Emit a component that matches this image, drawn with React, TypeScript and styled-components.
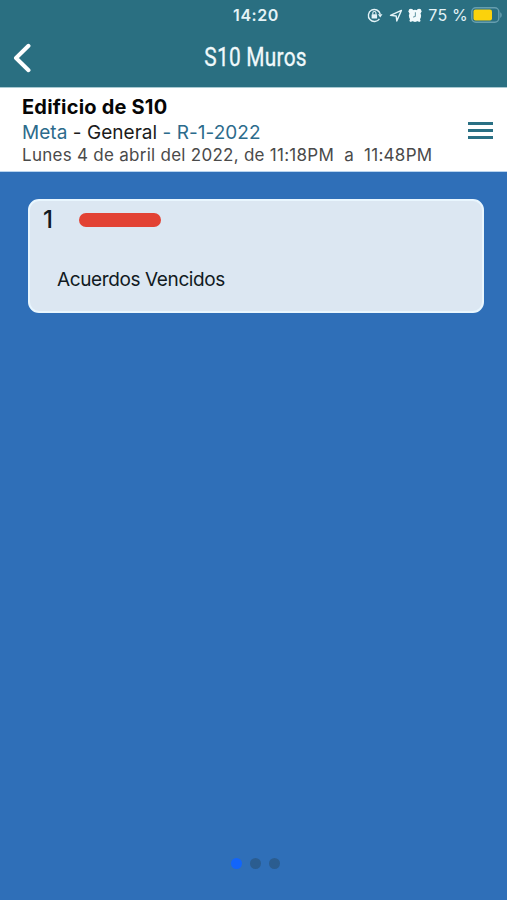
import React from "react";
import styled, { createGlobalStyle } from "styled-components";

const GlobalStyle = createGlobalStyle`
  * { box-sizing: border-box; }
  body { margin: 0; font-family: Inter, "Liberation Sans", sans-serif; }
`;

const Screen = styled.div`
  display: flex;
  flex-direction: column;
  width: 507px;
  height: 900px;
  overflow: hidden;
  background: #2f6fb8;
`;

const Header = styled.header`
  height: 88px;
  background: #2a6f81;
  border-bottom: 1px solid #a9cad2;
`;

const StatusBar = styled.div`
  display: grid;
  grid-template-columns: 1fr auto 1fr;
  align-items: center;
  height: 30px;
  padding: 0 5px 0 0;
  color: #e4f3f7;
`;

const Clock = styled.time`
  grid-column: 2;
  padding-left: 10px;
  font-size: 16px;
  font-weight: 600;
  letter-spacing: 0.55px;
`;

const StatusIcons = styled.div`
  display: flex;
  align-items: center;
  justify-content: flex-end;
  height: 30px;
`;

const ArrowIcon = styled.svg`
  margin-left: 6px;
`;

const AlarmIcon = styled.svg`
  margin-left: 5px;
`;

const Percent = styled.span`
  margin: 0 3px 0 6px;
  font-size: 16px;
  letter-spacing: 0.2px;
  white-space: nowrap;
`;

const NavBar = styled.div`
  display: grid;
  grid-template-columns: 60px 1fr 60px;
  align-items: center;
  height: 56px;
`;

const BackButton = styled.button`
  display: flex;
  padding: 0 0 0 12px;
  border: 0;
  background: none;
`;

const Title = styled.h1`
  margin: 0;
  padding-left: 5px;
  color: #f0f9fb;
  font: 400 25px/32px Roboto, sans-serif;
  letter-spacing: 0.3px;
  text-align: center;
  transform: scaleX(0.835);
  -webkit-text-stroke: 0.3px #f0f9fb;
`;

const Meeting = styled.section`
  display: flex;
  justify-content: space-between;
  height: 84px;
  padding: 7px 14px 0 22px;
  background: #fff;
  border-bottom: 1px solid #b9d4ef;
`;

const Details = styled.div`
  white-space: pre;
`;

const Name = styled.h2`
  margin: 0;
  color: #060606;
  font-size: 20px;
  font-weight: 700;
  line-height: 25px;
  letter-spacing: 0.2px;
`;

const Reference = styled.div`
  color: #2c6b8c;
  font-size: 19px;
  line-height: 25px;
  letter-spacing: 0.04px;
`;

const Group = styled.span`
  color: #1b1b1b;
`;

const Schedule = styled.div`
  color: #4a4a4a;
  font-size: 17px;
  line-height: 21px;
  letter-spacing: 0.27px;
`;

const MenuButton = styled.button`
  display: flex;
  flex-direction: column;
  gap: 4px;
  align-self: flex-start;
  margin: 27px 0 0;
  padding: 0;
  border: 0;
  background: none;
`;

const MenuLine = styled.span`
  width: 25px;
  height: 3px;
  background: #2a7084;
`;

const Content = styled.main`
  flex: 1;
  padding: 27px 23px 0 28px;
`;

const Card = styled.article`
  height: 114px;
  padding: 7px 13px;
  border: 2px solid #e9f6fe;
  border-radius: 11px;
  background: #dce7f2;
  color: #111a22;
`;

const CardTop = styled.div`
  display: flex;
  align-items: center;
  height: 24px;
`;

const Count = styled.span`
  width: 36px;
  font-size: 24px;
  font-weight: 500;
  line-height: 24px;
`;

const Bar = styled.span`
  width: 82px;
  height: 14px;
  border-radius: 7px;
  background: #e24234;
`;

const CardLabel = styled.div`
  margin: 36px 0 0 14px;
  font-size: 19px;
  line-height: 24px;
  letter-spacing: -0.38px;
  white-space: nowrap;
`;

const Pager = styled.nav`
  display: flex;
  justify-content: center;
  gap: 8px;
  padding-left: 4px;
  height: 42px;
`;

const Dot = styled.span<{ $active?: boolean }>`
  width: 11px;
  height: 11px;
  border-radius: 50%;
  background: ${({ $active }) => ($active ? "#1265fb" : "#2b5d90")};
`;

function RotationLock() {
  return (
    <svg width="16" height="16" viewBox="0 0 16 16" fill="none" stroke="currentColor" strokeWidth="1.4">
      <path d="M12.4 11.8A6 6 0 1 1 13.2 7" />
      <path d="M10.9 7.2h4.6l-2.3 3.2z" fill="currentColor" stroke="none" />
      <rect x="4.6" y="7.2" width="5.5" height="4.2" rx=".5" fill="currentColor" stroke="none" />
      <path d="M5.8 7.4V6a1.55 1.55 0 0 1 3.1 0v1.4" strokeWidth="1.1" />
    </svg>
  );
}

function LocationArrow() {
  return (
    <ArrowIcon width="14" height="15" viewBox="0 0 14 15" fill="none" stroke="currentColor" strokeWidth="1.4" strokeLinejoin="round">
      <path d="M1.5 7.4 12.4 2.4 7.8 13 7.2 8z" />
    </ArrowIcon>
  );
}

function Alarm() {
  return (
    <AlarmIcon width="14" height="15" viewBox="0 0 14 15">
      <g fill="#f2fafc">
        <circle cx="7" cy="7.8" r="6.1" />
        <circle cx="2.9" cy="3.2" r="2.4" />
        <circle cx="11.1" cy="3.2" r="2.4" />
        <path d="M2.2 10.5 1.4 13l1.3 1 2.5-1.2zM11.8 10.5l.8 2.5-1.3 1-2.5-1.2z" />
      </g>
      <path d="M7.4 4.3v3.8L5.2 9.2" fill="none" stroke="#6e9fac" strokeWidth="1.1" />
    </AlarmIcon>
  );
}

function Battery() {
  return (
    <svg width="31" height="16" viewBox="0 0 31 16">
      <rect x=".8" y=".8" width="27" height="14.4" rx="4" fill="none" stroke="#669eaf" strokeWidth="1.4" />
      <path d="M29.2 5.2c2 .7 2 4.9 0 5.6z" fill="#669eaf" />
      <rect x="2.5" y="2.5" width="18.5" height="11" rx="2" fill="#fbd20c" />
    </svg>
  );
}

export default function App() {
  return (
    <>
      <GlobalStyle />
      <Screen>
        <Header>
          <StatusBar>
            <Clock>14:20</Clock>
            <StatusIcons>
              <RotationLock />
              <LocationArrow />
              <Alarm />
              <Percent>75 %</Percent>
              <Battery />
            </StatusIcons>
          </StatusBar>
          <NavBar>
            <BackButton aria-label="Volver">
              <svg width="20" height="30" viewBox="0 0 20 30" fill="none" stroke="#fff" strokeWidth="4" strokeLinecap="round" strokeLinejoin="round">
                <path d="M16.5 2.8 4 15l12.5 12.2" />
              </svg>
            </BackButton>
            <Title>S10 Muros</Title>
          </NavBar>
        </Header>
        <Meeting>
          <Details>
            <Name>Edificio de S10</Name>
            <Reference>
              Meta <Group>- General</Group> - R-1-2022
            </Reference>
            <Schedule>{"Lunes 4 de abril del 2022, de 11:18PM  a  11:48PM"}</Schedule>
          </Details>
          <MenuButton aria-label="Menú">
            <MenuLine />
            <MenuLine />
            <MenuLine />
          </MenuButton>
        </Meeting>
        <Content>
          <Card>
            <CardTop>
              <Count>1</Count>
              <Bar />
            </CardTop>
            <CardLabel>Acuerdos Vencidos</CardLabel>
          </Card>
        </Content>
        <Pager>
          <Dot $active />
          <Dot />
          <Dot />
        </Pager>
      </Screen>
    </>
  );
}
